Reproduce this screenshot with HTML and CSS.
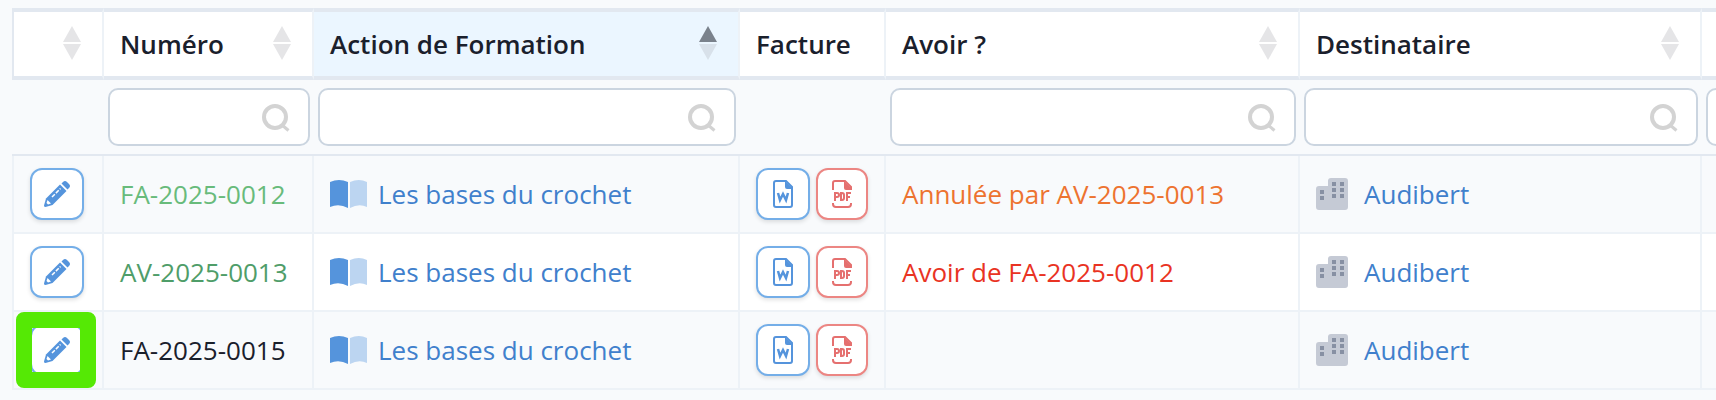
FILE: index.html
```
<!DOCTYPE html>
<html lang="fr">

<head>
    <meta charset="UTF-8">
    <meta name="viewport" content="width=device-width, initial-scale=1.0">
    <title>Factures</title>

    <link rel="stylesheet" href="styles.css">
</head>

<body>
    <svg class="sprite" aria-hidden="true">
        <symbol id="i-sort" viewBox="0 0 18 36">
            <path class="up" d="M9 0l9 16H0z" />
            <path class="down" d="M0 18h18L9 34z" />
        </symbol>
        <symbol id="i-search" viewBox="0 0 28 28">
            <circle cx="13" cy="13" r="11" fill="none" stroke="currentColor" stroke-width="4" />
            <path d="M20 21l6.500 5.500" fill="none" stroke="currentColor" stroke-width="3" />
        </symbol>
        <symbol id="i-pencil" viewBox="0 0 26 26">
            <path fill="currentColor" d="M16 3.500l6.500 6.500L8.500 24 1.500 26Q0 26 0 24.500L2 17.500z" />
            <path fill="currentColor" d="M17.500 2.500l1.500-1.500q2-2 4 0l2 2q2 2 0 4l-1.500 1.500z" />
            <path fill="none" stroke="#fff" stroke-width="1.500" stroke-dasharray="4 1.500" d="M8 16L16.500 7.500" />
            <path fill="#fff" d="M3.500 19l3.500 3.500-3 1-1.500-1.500z" />
        </symbol>
        <symbol id="i-book" viewBox="0 0 37 28">
            <path fill="#5594dc" d="M0 2Q9 -2 18 2V28Q9 23 0 27z" />
            <path fill="#bcd5f1" d="M20 2Q29 -2 37 2V27Q29 23 20 28z" />
        </symbol>
        <symbol id="i-word" viewBox="0 0 20 28">
            <path fill="none" stroke="currentColor" stroke-width="2" d="M13 1H3Q1 1 1 3v22q0 2 2 2h14q2 0 2-2V7z" />
            <path fill="currentColor" d="M12 1l7 7v1h-5q-2 0-2-2z" />
            <path fill="none" stroke="currentColor" stroke-width="2.500" d="M5 13l2 7 3-6 3 6 2-7" />
        </symbol>
        <symbol id="i-pdf" viewBox="0 0 20 28">
            <path fill="none" stroke="currentColor" stroke-width="2" d="M1 10V3q0-2 2-2h10l6 6v3M1 23v1q0 3 3 3h12q3 0 3-3v-1" />
            <path fill="currentColor" d="M12 1l7 7v2h-5q-2 0-2-2z" />
            <path fill="none" stroke="currentColor" stroke-width="2" d="M3 21v-8h2q2 0 2 2t-2 2H3M9 13v7h1q2 0 2-2v-3q0-2-2-2zM15 21v-8h4M15 17h3" />
        </symbol>
        <symbol id="i-building" viewBox="0 0 32 32">
            <path fill="#c5cad5" d="M3 8h9V3q0-3 3-3h14q3 0 3 3v26q0 3-3 3H3q-3 0-3-3V11q0-3 3-3z" />
            <path fill="#8790a3" d="M4 12h4v4H4zM4 18h4v4H4zM16 4h4v4h-4zM24 4h4v4h-4zM16 10h4v4h-4zM24 10h4v4h-4zM16 16h4v4h-4zM24 16h4v4h-4z" />
        </symbol>
    </svg>

    <div class="table-wrapper">
        <table>
            <colgroup>
                <col class="col-edit">
                <col class="col-numero">
                <col class="col-action">
                <col class="col-facture">
                <col class="col-avoir">
                <col class="col-destinataire">
                <col>
            </colgroup>
            <thead>
                <tr class="titles">
                    <th><div class="title"><svg class="sort"><use href="#i-sort" /></svg></div></th>
                    <th><div class="title">Numéro <svg class="sort"><use href="#i-sort" /></svg></div></th>
                    <th class="sorted" aria-sort="ascending"><div class="title">Action de Formation <svg class="sort"><use href="#i-sort" /></svg></div></th>
                    <th><div class="title">Facture</div></th>
                    <th><div class="title">Avoir ? <svg class="sort"><use href="#i-sort" /></svg></div></th>
                    <th><div class="title">Destinataire <svg class="sort"><use href="#i-sort" /></svg></div></th>
                    <th></th>
                </tr>
                <tr class="filters">
                    <td></td>
                    <td><div class="search"><input type="text" aria-label="Numéro"><svg><use href="#i-search" /></svg></div></td>
                    <td><div class="search"><input type="text" aria-label="Action de Formation"><svg><use href="#i-search" /></svg></div></td>
                    <td></td>
                    <td><div class="search"><input type="text" aria-label="Avoir ?"><svg><use href="#i-search" /></svg></div></td>
                    <td><div class="search"><input type="text" aria-label="Destinataire"><svg><use href="#i-search" /></svg></div></td>
                    <td><div class="search"><input type="text" aria-label="Filtre"></div></td>
                </tr>
            </thead>
            <tbody>
                <tr>
                    <td><div class="cell"><button class="btn" aria-label="Modifier"><svg class="pencil"><use href="#i-pencil" /></svg></button></div></td>
                    <td class="issued">FA-2025-0012</td>
                    <td><a class="cell formation" href="#"><svg class="book"><use href="#i-book" /></svg>Les bases du crochet</a></td>
                    <td><div class="cell"><button class="btn" aria-label="Word"><svg class="file"><use href="#i-word" /></svg></button><button class="btn pdf" aria-label="PDF"><svg class="file"><use href="#i-pdf" /></svg></button></div></td>
                    <td class="cancelled">Annulée par AV-2025-0013</td>
                    <td><a class="cell client" href="#"><svg class="building"><use href="#i-building" /></svg>Audibert</a></td>
                    <td></td>
                </tr>
                <tr>
                    <td><div class="cell"><button class="btn" aria-label="Modifier"><svg class="pencil"><use href="#i-pencil" /></svg></button></div></td>
                    <td class="paid">AV-2025-0013</td>
                    <td><a class="cell formation" href="#"><svg class="book"><use href="#i-book" /></svg>Les bases du crochet</a></td>
                    <td><div class="cell"><button class="btn" aria-label="Word"><svg class="file"><use href="#i-word" /></svg></button><button class="btn pdf" aria-label="PDF"><svg class="file"><use href="#i-pdf" /></svg></button></div></td>
                    <td class="credit">Avoir de FA-2025-0012</td>
                    <td><a class="cell client" href="#"><svg class="building"><use href="#i-building" /></svg>Audibert</a></td>
                    <td></td>
                </tr>
                <tr>
                    <td class="highlight"><div class="cell"><button class="btn" aria-label="Modifier"><svg class="pencil"><use href="#i-pencil" /></svg></button></div></td>
                    <td>FA-2025-0015</td>
                    <td><a class="cell formation" href="#"><svg class="book"><use href="#i-book" /></svg>Les bases du crochet</a></td>
                    <td><div class="cell"><button class="btn" aria-label="Word"><svg class="file"><use href="#i-word" /></svg></button><button class="btn pdf" aria-label="PDF"><svg class="file"><use href="#i-pdf" /></svg></button></div></td>
                    <td></td>
                    <td><a class="cell client" href="#"><svg class="building"><use href="#i-building" /></svg>Audibert</a></td>
                    <td></td>
                </tr>
            </tbody>
        </table>
    </div>
</body>

</html>
```

FILE: styles.css
```
* {
    box-sizing: border-box;
}

body {
    margin: 0;
    background: #f8fafc;
    color: #1a202c;
    font-family: "Open Sans", "Noto Sans", sans-serif;
    font-size: 26px;
    line-height: 36px;
}

.sprite {
    display: none;
}

.table-wrapper {
    padding: 8px 0 0 12px;
    overflow: hidden;
}

table {
    width: 112%;
    table-layout: fixed;
    border-collapse: separate;
    border-spacing: 0;
}

.col-edit {
    width: 92px;
}

.col-numero {
    width: 210px;
}

.col-action {
    width: 426px;
}

.col-facture {
    width: 146px;
}

.col-avoir {
    width: 414px;
}

.col-destinataire {
    width: 402px;
}

/* header */
.titles th {
    padding: 0 21px 0 16px;
    background: #fff;
    border-top: 4px solid #e2e8f0;
    border-bottom: 4px solid #e2e8f0;
    border-right: 2px solid #edf2f7;
    font-weight: 600;
    text-align: left;
}

.titles th:first-child {
    border-left: 2px solid #e2e8f0;
}

.titles .sorted {
    background: #ebf6ff;
}

.title {
    display: flex;
    align-items: center;
    justify-content: space-between;
    height: 64px;
}

.title .sort:only-child {
    margin-left: auto;
}

.sort {
    width: 18px;
    height: 36px;
    fill: #e5e5e7;
}

.sorted .sort {
    fill: #d8e1ea;
    --up: #7a828c;
}

.up {
    fill: var(--up, inherit);
}

/* filters */
.filters td {
    padding: 8px 4px;
    border-bottom: 2px solid #e2e8f0;
}

.search {
    position: relative;
}

.search input {
    display: block;
    width: 100%;
    height: 58px;
    padding: 0 56px 0 16px;
    background: #fff;
    border: 2px solid #cbd5e0;
    border-radius: 10px;
    font: inherit;
}

.search svg {
    position: absolute;
    top: 16px;
    right: 20px;
    width: 28px;
    height: 28px;
    color: #d3d3d3;
}

/* rows */
tbody td {
    height: 78px;
    padding: 0 16px;
    border-right: 2px solid #edf2f7;
    border-bottom: 2px solid #edf2f7;
    white-space: nowrap;
}

tbody td:first-child {
    border-left: 2px solid #edf2f7;
}

tbody tr:nth-child(even) {
    background: #fff;
}

.cell {
    display: flex;
    align-items: center;
    gap: 6px;
}

a {
    color: #4080cc;
    text-decoration: none;
}

.formation {
    gap: 11px;
}

.client {
    gap: 16px;
}

.issued {
    color: #68bb7b;
}

.paid {
    color: #4f9d69;
}

.cancelled {
    color: #ed7330;
}

.credit {
    color: #e93323;
}

.btn {
    display: flex;
    align-items: center;
    justify-content: center;
    width: 54px;
    height: 52px;
    padding: 0;
    background: #fff;
    border: 2px solid #74aee8;
    border-radius: 12px;
    box-shadow: 0 2px 4px rgba(0, 0, 0, 0.12);
    color: #5594dc;
}

.btn.pdf {
    width: 52px;
    border-color: #ec8683;
    color: #e5706f;
}

.pencil {
    width: 26px;
    height: 26px;
}

.file {
    width: 20px;
    height: 28px;
}

.book {
    width: 37px;
    height: 28px;
}

.building {
    width: 32px;
    height: 32px;
}

.highlight {
    position: relative;
}

.highlight::after {
    content: "";
    position: absolute;
    inset: 0 6px 0 2px;
    border: 16px solid #55e905;
    border-radius: 8px;
    pointer-events: none;
}
```
